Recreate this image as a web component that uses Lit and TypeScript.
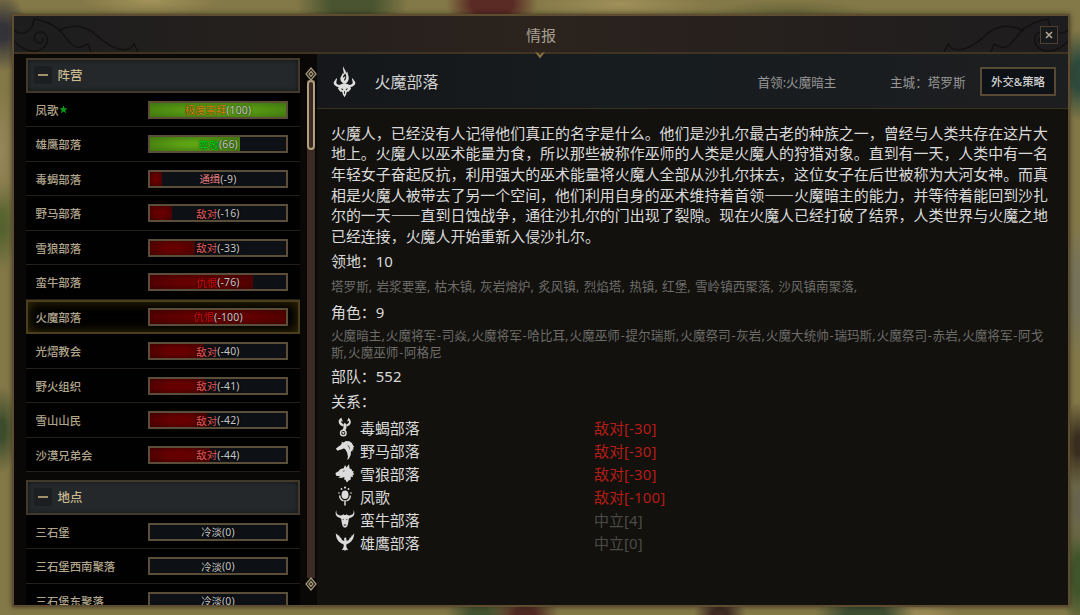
import { css, CSSResultGroup, html, LitElement, nothing, svg, SVGTemplateResult, TemplateResult } from "lit";
import { customElement, property } from "lit/decorators.js";
import { classMap } from "lit/directives/class-map.js";
import { styleMap } from "lit/directives/style-map.js";

type Mood = "worship" | "respect" | "wanted" | "hostile" | "hatred" | "cold";

interface Standing {
    name: string;
    mood: Mood;
    value: number;
    starred?: boolean;
    selected?: boolean;
}

interface Relation {
    icon: string;
    name: string;
    value: number;
}

const MOOD_LABELS: Record<Mood, string> = {
    worship: "极度崇拜",
    respect: "尊敬",
    wanted: "通缉",
    hostile: "敌对",
    hatred: "仇恨",
    cold: "冷淡",
};

const FACTIONS: Standing[] = [
    { name: "凤歌", mood: "worship", value: 100, starred: true },
    { name: "雄鹰部落", mood: "respect", value: 66 },
    { name: "毒蝎部落", mood: "wanted", value: -9 },
    { name: "野马部落", mood: "hostile", value: -16 },
    { name: "雪狼部落", mood: "hostile", value: -33 },
    { name: "蛮牛部落", mood: "hatred", value: -76 },
    { name: "火魔部落", mood: "hatred", value: -100, selected: true },
    { name: "光熠教会", mood: "hostile", value: -40 },
    { name: "野火组织", mood: "hostile", value: -41 },
    { name: "雪山山民", mood: "hostile", value: -42 },
    { name: "沙漠兄弟会", mood: "hostile", value: -44 },
];

const PLACES: Standing[] = [
    { name: "三石堡", mood: "cold", value: 0 },
    { name: "三石堡西南聚落", mood: "cold", value: 0 },
    { name: "三石堡东聚落", mood: "cold", value: 0 },
];

const STORY = [
    "火魔人，已经没有人记得他们真正的名字是什么。他们是沙扎尔最古老的种族之一，曾经与人类共存在这片大",
    "地上。火魔人以巫术能量为食，所以那些被称作巫师的人类是火魔人的狩猎对象。直到有一天，人类中有一名",
    "年轻女子奋起反抗，利用强大的巫术能量将火魔人全部从沙扎尔抹去，这位女子在后世被称为大河女神。而真",
    "相是火魔人被带去了另一个空间，他们利用自身的巫术维持着首领——火魔暗主的能力，并等待着能回到沙扎",
    "尔的一天——直到日蚀战争，通往沙扎尔的门出现了裂隙。现在火魔人已经打破了结界，人类世界与火魔之地",
    "已经连接，火魔人开始重新入侵沙扎尔。",
];

const TERRITORIES = ["塔罗斯, 岩浆要塞, 枯木镇, 灰岩熔炉, 炙风镇, 烈焰塔, 热镇, 红堡, 雪岭镇西聚落, 沙风镇南聚落,"];

const CHARACTERS = [
    "火魔暗主,火魔将军-司焱,火魔将军-哈比耳,火魔巫师-提尔瑞斯,火魔祭司-灰岩,火魔大统帅-瑞玛斯,火魔祭司-赤岩,火魔将军-阿戈",
    "斯,火魔巫师-阿格尼",
];

const RELATIONS: Relation[] = [
    { icon: "scorpion", name: "毒蝎部落", value: -30 },
    { icon: "horse", name: "野马部落", value: -30 },
    { icon: "wolf", name: "雪狼部落", value: -30 },
    { icon: "phoenix", name: "凤歌", value: -100 },
    { icon: "bull", name: "蛮牛部落", value: 4 },
    { icon: "eagle", name: "雄鹰部落", value: 0 },
];

const EMBLEMS: Record<string, SVGTemplateResult> = {
    scorpion: svg`
        <path d="M6.400 .8C3 2.400 2.800 6 5.800 8.400l2.400 1L8 7 6.300 5.400l.1-1.900 1.600 1.500zM13.400 .8l-1.200 3.700 1.800-.8-.2 2-2.200 2v1.900c4.400-1 6-5.500 1.800-8.800z"/>
        <path d="M8.200 7.500l1.600-1.700 1.900 1.900-.4 3.900-1.500 2.300-2.200-.9.900-2.500z"/>
        <circle cx="8.300" cy="16" r="2.800" fill="none" stroke="currentColor" stroke-width="1.400"/>
        <path d="M6.800 15l3 .2-1.500 2.300z"/>`,
    horse: svg`
        <path d="M.8 8.800L3.500 6.500l2-1.300 1.400-2L6.500 1.800l2 .6L11 1l3.300.3 2.600 1.700 1.200 2.600 1.200 1.200-1.300 1 .8 2-1.600-.2.300 2.200-1.500-.8-.3 4-1.900 3.800-1.600 1.200.8-3.600-.9-4-2-3.500-1.500-.4-2.300 1-2 .4-1.700.8z"/>
        <path class="hole" d="M12 4.500c2 1 3 3 3 6-.6-2.500-1.600-4.300-3-6z"/>`,
    wolf: svg`
        <path d="M.5 10l3-1.700L5.500 6l3.200-.8L10 2l1.500 2.500L14 1.200l.6 4.300 2.400 1-.2 1.200 2.300 1-1.200 1.100 1.500 1.800-1.900.3.600 2.200-2.200-.4-.2 2.700-2 1-1.800 2-1.600-3L9 16.500l.6-2.600-3.300 1-3.300-.5 2.500-1.200L1 12.800z"/>
        <path class="hole" d="M7.500 8l2.300-.6-.8 1.200z"/>`,
    phoenix: svg`
        <ellipse cx="10" cy="8.700" rx="3.500" ry="4.300"/>
        <circle cx="10" cy="1.600" r="1.100"/><circle cx="6.500" cy="3" r=".9"/><circle cx="13.500" cy="3" r=".9"/>
        <circle cx="4" cy="7" r=".8"/><circle cx="16" cy="7" r=".8"/>
        <path d="M4.600 9.500c.3 3 1.600 4.700 4 5.400M15.400 9.500c-.3 3-1.600 4.700-4 5.400M10 14v5.500" fill="none" stroke="currentColor" stroke-width="1.500"/>`,
    bull: svg`
        <path d="M1.500 1C-.6 4.500 1 8.300 5.200 9l1 .8.6 4.200.8 3 1.400 1.500h2l1.400-1.500.8-3 .6-4.200 1-.8C19 8.300 20.600 4.500 18.500 1c.6 3.400-.5 5-3.500 5.400l-2-.2-1.400-1-.8.8H9.200l-.8-.8-1.400 1-2 .2C2 6 .9 4.400 1.500 1z"/>
        <path class="hole" d="M7.400 9.800l1.500.7-.7.700zM12.600 9.800l-1.500.7.7.700zM8.800 15.500h2.400v1H8.800z"/>`,
    eagle: svg`
        <path d="M.8 1.200C.9 6.500 3.500 10.600 8.200 12l.6 1.600-.4 2-1.600 2.600 2.200-.4 1 1.200 1-1.200 2.200.4-1.600-2.600-.4-2 .6-1.600c4.700-1.400 7.300-5.500 7.400-10.800l-1.800 2.600-.4-.8-1.300 3-.6-.7-1.200 2.800-2.300.8-.3-2.300-1-1.300-1.200 1 .2 2.600-2.300-.8-1.200-2.800-.6.7-1.300-3-.4.8z"/>`,
};

@customElement("standing-row")
export class StandingRow extends LitElement {
    @property({ attribute: false }) public standing!: Standing;

    protected render(): TemplateResult {
        const { name, mood, value, starred, selected } = this.standing;
        return html`
            <div class=${classMap({ row: true, selected: !!selected })}>
                <div class="name">
                    ${name}${starred
                        ? html`<svg class="star" viewBox="0 0 10 10"><path d="M5 .3l1.200 3.300h3.500L6.900 5.700 8 9.300 5 7.200 2 9.300l1.100-3.600L.3 3.600h3.500z" /></svg>`
                        : nothing}
                </div>
                <div class="bar">
                    <div
                        class=${classMap({ fill: true, good: value > 0 })}
                        style=${styleMap({ width: `${Math.abs(value)}%` })}
                    ></div>
                    <div class="text"><span class=${mood}>${MOOD_LABELS[mood]}</span><span class="value">(${value})</span></div>
                </div>
            </div>
        `;
    }

    static get styles(): CSSResultGroup {
        return css`
            :host {
                display: block;
            }
            .row {
                box-sizing: border-box;
                height: 34.5px;
                padding: 1px 12px 0 9.5px;
                display: flex;
                align-items: center;
                justify-content: space-between;
                background: #010101;
                border-bottom: 1px solid #25201a;
            }
            .row.selected {
                border: 2px solid #4b3f1b;
                padding: 0 10px 0 7.5px;
                box-shadow: inset 0 0 12px #3a2d08;
            }
            .name {
                display: flex;
                align-items: center;
                font-size: 11.4px;
                font-weight: 500;
                color: #b0a48b;
            }
            .star {
                width: 9px;
                height: 9px;
                margin-left: 1px;
                fill: #0c9a1c;
            }
            .bar {
                box-sizing: border-box;
                position: relative;
                width: 140px;
                height: 18px;
                border: 2px solid #5a4e38;
                background: #0d1014;
            }
            .fill {
                height: 100%;
                background: radial-gradient(ellipse at center, #660000 30%, #420002 100%);
            }
            .fill.good {
                background: radial-gradient(ellipse at center, #5ea313 20%, #3e7410 100%);
            }
            .text {
                position: absolute;
                inset: 0;
                display: flex;
                align-items: center;
                justify-content: center;
                font-size: 10.4px;
                color: #c6c6c6;
                text-shadow: 0 0 2px #000;
            }
            .value {
                letter-spacing: 0.2px;
            }
            .worship {
                color: #d88814;
                text-shadow: 0 0 1px #000;
            }
            .respect {
                color: #00d01c;
                text-shadow: 0 0 1px #000;
            }
            .wanted {
                color: #e88080;
            }
            .hostile {
                color: #e05a5a;
            }
            .hatred {
                color: #c80d0d;
            }
        `;
    }
}

@customElement("app-root")
export class AppRoot extends LitElement {
    private renderOrnament(side: string): TemplateResult {
        return html`
            <svg class="ornament ${side}" viewBox="0 0 126 36">
                <g fill="none" stroke-width="1.5">
                    <path d="M0 14c6 6 18 4 20-11 10 1 19 6 26 11 6 8 14 20 21 17 4-1 6-3 7-3l3 8" />
                    <path d="M44 15c15-8 28-5 38 4s22 17 32 14c3-1 5-3 6-5l4 8" />
                    <path d="M0 25c8 9 18 12 26 9 9-4 10-17 1-18-8-1-9 11-1 11 3 0 4-4 2-5" />
                </g>
            </svg>
        `;
    }

    private renderGroup(title: string, rows: Standing[]): TemplateResult {
        return html`
            <section class="group">
                <div class="group-title"><span class="toggle"></span>${title}</div>
                ${rows.map((row) => html`<standing-row .standing=${row}></standing-row>`)}
            </section>
        `;
    }

    private renderKnob(): TemplateResult {
        return html`
            <svg class="knob" viewBox="0 0 12 14">
                <path d="M6 1l5 6-5 6-5-6z" />
                <path d="M6 4.500l2 2.500-2 2.500L4 7z" />
            </svg>
        `;
    }

    private renderList(lines: string[]): TemplateResult[] {
        return lines.map(
            (line) => html`<div>${line.split(/([,-])/).map((part) =>
                part === "-" || part === "," ? html`<span class=${part === "-" ? "dash" : "comma"}>${part}</span>` : part
            )}</div>`
        );
    }

    private renderRelation({ icon, name, value }: Relation): TemplateResult {
        const hostile = value < 0;
        return html`
            <div class="relation">
                <svg class="emblem" viewBox="0 0 20 20">${EMBLEMS[icon]}</svg>
                <span class="tribe">${name}</span>
                <span class=${hostile ? "hostile" : "neutral"}>${hostile ? "敌对" : "中立"}<span class="score">[${value}]</span></span>
            </div>
        `;
    }

    protected render(): TemplateResult {
        return html`
            <div class="window" lang="zh-CN">
                <header class="titlebar">
                    ${this.renderOrnament("left")} ${this.renderOrnament("right")}
                    <span>情报</span>
                    <svg class="notch" viewBox="0 0 10 7"><path d="M0 0l5 6.500L10 0 7 1 5 3 3 1z" /></svg>
                    <button class="close" aria-label="关闭">
                        <svg viewBox="0 0 8 8"><path d="M1 1l6 6M7 1L1 7" /></svg>
                    </button>
                </header>
                <div class="body">
                    <nav class="sidebar">
                        ${this.renderGroup("阵营", FACTIONS)} ${this.renderGroup("地点", PLACES)}
                    </nav>
                    <div class="scroll">
                        ${this.renderKnob()}
                        <div class="track"><div class="thumb"></div></div>
                        ${this.renderKnob()}
                    </div>
                    <main class="detail">
                        <div class="heading">
                            <svg class="crest" viewBox="0 0 24 34">
                                <path d="M11 .5c-.6 3 2.800 4.500 2.600 7.500l1.600-1.500c-.4 2.500 1.600 4.500 1.200 7.500-.3 2.500-1.400 4-3.400 5h-2c-2.300-1-3.500-2.800-3.300-5.300.2-2.400 2.100-3.200 2.300-5.700l1 1.200c1-2.700-1.600-5 0-8.700z" />
                                <path class="hole" d="M12.600 8.500c-.6 2-2.600 2.600-2.300 4.500l2.500-1.400c.5 2-1.800 2.600-1 4.800 2.300-1.400 2.800-5 .8-7.900z" />
                                <path d="M3.500 13.500L.6 18l.6 2.300L4 22.500l4 .5 4-2 4 2 4-.5 2.800-2.200.6-2.300-2.900-4.500-.7.600.8 3.900-.6 1.700-2.400 1-5.600-2.200L6.400 20.700 4 19.700l-.6-1.700.8-3.900z" />
                                <path d="M6 22l6-2.500 6 2.500.8 2.500-2.800 3.500-1.500-.5-.8 3L12 33.500l-1.700-3-.8-3-1.500.5-2.800-3.500z" />
                                <path class="hole" d="M8.500 24l2.500 1.200-1.500.8zM15.500 24L13 25.200l1.500.8zM11.600 27h.8v3h-.8z" />
                            </svg>
                            <h1>火魔部落</h1>
                            <span class="leader">首领:火魔暗主</span>
                            <span class="capital">主城：塔罗斯</span>
                            <button class="action">外交&amp;策略</button>
                        </div>
                        <div class="content">
                            <div class="story">${STORY.map((line) => html`<div>${line}</div>`)}</div>
                            <div class="stat">领地：10</div>
                            <div class="list territories">${this.renderList(TERRITORIES)}</div>
                            <div class="stat">角色：9</div>
                            <div class="list characters">${this.renderList(CHARACTERS)}</div>
                            <div class="stat">部队：552</div>
                            <div class="stat">关系：</div>
                            <div class="relations">${RELATIONS.map((r) => this.renderRelation(r))}</div>
                        </div>
                    </main>
                </div>
            </div>
        `;
    }

    static get styles(): CSSResultGroup {
        return css`
            :host {
                box-sizing: border-box;
                display: block;
                width: 1080px;
                height: 615px;
                padding: 14px 10px 8px 12px;
                overflow: hidden;
                font-family: "Noto Sans", "Noto Sans CJK SC", sans-serif;
                background:
                    radial-gradient(ellipse 46px 26px at 492px 4px, #5a2a24 45%, transparent),
                    radial-gradient(ellipse 56px 28px at 352px 4px, #4a5430 40%, transparent),
                    radial-gradient(ellipse 70px 16px at 150px 0, #a3925a, transparent),
                    radial-gradient(ellipse 90px 16px at 620px 4px, #a0905a, transparent),
                    radial-gradient(ellipse 80px 12px at 790px 12px, #69663a, transparent),
                    radial-gradient(ellipse 24px 40px at 3px 32px, #35333a 20%, transparent),
                    radial-gradient(ellipse 16px 46px at 1078px 75px, #2e4a3c 30%, transparent),
                    radial-gradient(ellipse 20px 60px at 0 150px, #97875a, transparent),
                    radial-gradient(ellipse 16px 46px at 2px 225px, #566330 20%, transparent),
                    radial-gradient(ellipse 16px 44px at 2px 430px, #3d4c2c 20%, transparent),
                    radial-gradient(ellipse 18px 70px at 1078px 290px, #77735a 30%, transparent),
                    radial-gradient(ellipse 16px 44px at 1078px 445px, #382d1e 20%, transparent),
                    radial-gradient(ellipse 16px 50px at 1078px 505px, #67644d 20%, transparent),
                    radial-gradient(ellipse 16px 60px at 1078px 575px, #41552a 30%, transparent),
                    radial-gradient(ellipse 50px 20px at 865px 614px, #3f4e31 40%, transparent),
                    radial-gradient(ellipse 46px 20px at 915px 614px, #9a8855 30%, transparent),
                    radial-gradient(ellipse 26px 18px at 720px 614px, #3f2b22 30%, transparent),
                    radial-gradient(ellipse 34px 18px at 525px 614px, #502a22 30%, transparent),
                    radial-gradient(ellipse 34px 18px at 480px 614px, #455430 30%, transparent),
                    #837847;
            }
            button {
                font-family: inherit;
                padding: 0;
            }
            .window {
                box-sizing: border-box;
                height: 100%;
                display: flex;
                flex-direction: column;
                border: 2px solid #5f4d31;
                background: #12110d;
                box-shadow: 0 0 5px rgba(0, 0, 0, 0.5);
            }
            .titlebar {
                box-sizing: border-box;
                position: relative;
                flex: none;
                height: 38px;
                display: flex;
                align-items: center;
                justify-content: center;
                border-bottom: 2px solid #3f3322;
                background: linear-gradient(90deg, #1d1d1e, #2c231d 50%, #1d1c1e);
                font-size: 15px;
                color: #a9a196;
                z-index: 1;
            }
            .ornament {
                position: absolute;
                bottom: 0;
                width: 126px;
                height: 36px;
                stroke: #131110;
            }
            .ornament.left {
                left: 0;
            }
            .ornament.right {
                right: 0;
                transform: scaleX(-1);
            }
            .notch {
                position: absolute;
                top: 36px;
                left: 50%;
                width: 10px;
                height: 7px;
                margin-left: -6px;
                fill: #8a7444;
            }
            .close {
                box-sizing: border-box;
                position: absolute;
                top: 10px;
                right: 10px;
                width: 18px;
                height: 18px;
                display: flex;
                align-items: center;
                justify-content: center;
                border: 1px solid #4d4030;
                background: #17191a;
            }
            .close svg {
                width: 8px;
                height: 8px;
                stroke: #b5aa98;
                stroke-width: 1.5;
            }
            .body {
                flex: 1;
                min-height: 0;
                display: flex;
            }
            .sidebar {
                box-sizing: border-box;
                width: 286px;
                padding: 4px 0 0 12px;
                flex: none;
                display: flex;
                flex-direction: column;
                gap: 8px;
                overflow: hidden;
                background: #090806;
            }
            .group {
                flex: none;
            }
            .group-title {
                box-sizing: border-box;
                height: 34.5px;
                padding-left: 6px;
                display: flex;
                align-items: center;
                gap: 5.5px;
                border: 2px solid #43392a;
                background: #24282a;
                box-shadow: inset 0 0 4px #111416;
                font-size: 12.4px;
                font-weight: 500;
                color: #cdbb90;
            }
            .toggle {
                width: 18px;
                height: 18px;
                display: flex;
                align-items: center;
                justify-content: center;
                background: #1c1f21;
                border-radius: 2px;
            }
            .toggle::before {
                content: "";
                width: 10px;
                height: 2px;
                background: #a39269;
            }
            .scroll {
                box-sizing: border-box;
                width: 17px;
                padding: 14px 0 15px 5px;
                flex: none;
                display: flex;
                flex-direction: column;
                align-items: center;
                background: #090806;
            }
            .knob {
                flex: none;
                width: 12px;
                height: 14px;
                margin: -1px 0;
                fill: #12100d;
                stroke: #a39679;
                stroke-width: 1.3;
                z-index: 1;
            }
            .track {
                flex: 1;
                width: 8px;
                background: #3c2b24;
            }
            .thumb {
                box-sizing: border-box;
                width: 8px;
                height: 70px;
                border: 2px solid #b0a07c;
                border-radius: 4px;
                background: #3b2a23;
            }
            .detail {
                flex: 1;
                min-width: 0;
            }
            .heading {
                box-sizing: border-box;
                height: 55px;
                padding: 0 12px 0 16px;
                display: flex;
                align-items: center;
                border-bottom: 1px solid #3a3320;
                background: linear-gradient(90deg, #15171a, #171c1f 40%, #1d1e20);
                font-size: 12.6px;
                color: #979797;
            }
            .crest {
                width: 23px;
                height: 33px;
                fill: #dedede;
            }
            .hole {
                fill: #12110d;
            }
            h1 {
                margin: 0 auto 0 18.5px;
                font-size: 16px;
                font-weight: 400;
                color: #d0d0d0;
            }
            .leader {
                margin-right: 53.5px;
            }
            .action {
                box-sizing: border-box;
                width: 76px;
                height: 29px;
                margin-left: 14.5px;
                border: 2px solid #584932;
                background: #0e1116;
                font-size: 11.4px;
                font-weight: 500;
                color: #d0d0d0;
            }
            .content {
                padding: 13.5px 14px 0 14px;
                white-space: nowrap;
            }
            .story {
                margin-bottom: 2.5px;
                font-family: "Noto Sans CJK SC", sans-serif;
                font-size: 14.95px;
                line-height: 20.7px;
                color: #dadada;
            }
            .stat {
                font-size: 14.95px;
                line-height: 25px;
                color: #dadada;
            }
            .list {
                font-size: 12.6px;
                line-height: 17.5px;
                color: #6d6c69;
            }
            .territories {
                padding: 4px 0;
            }
            .characters {
                padding: 2px 0;
            }
            .dash {
                margin: 0 0.75px;
            }
            .comma {
                letter-spacing: 1.05px;
            }
            .relations {
                padding-top: 2px;
            }
            .relation {
                height: 23px;
                display: flex;
                align-items: center;
                font-size: 14.95px;
            }
            .emblem {
                width: 20px;
                height: 20px;
                margin: 0 5px 0 4px;
                fill: #dcdcdc;
                color: #dcdcdc;
            }
            .tribe {
                width: 234px;
                color: #dadada;
            }
            .score {
                letter-spacing: 0.2px;
            }
            .hostile {
                color: #b51c16;
            }
            .neutral {
                color: #4c4b48;
            }
        `;
    }
}
